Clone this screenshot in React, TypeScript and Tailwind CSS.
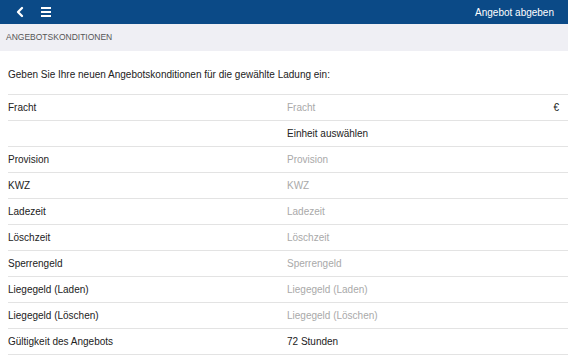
import { ChevronLeft } from "lucide-react";

const rows = [
  { label: "Fracht", value: "Fracht", placeholder: true, suffix: "€" },
  { label: "", value: "Einheit auswählen", placeholder: false },
  { label: "Provision", value: "Provision", placeholder: true },
  { label: "KWZ", value: "KWZ", placeholder: true },
  { label: "Ladezeit", value: "Ladezeit", placeholder: true },
  { label: "Löschzeit", value: "Löschzeit", placeholder: true },
  { label: "Sperrengeld", value: "Sperrengeld", placeholder: true },
  { label: "Liegegeld (Laden)", value: "Liegegeld (Laden)", placeholder: true },
  { label: "Liegegeld (Löschen)", value: "Liegegeld (Löschen)", placeholder: true },
  { label: "Gültigkeit des Angebots", value: "72 Stunden", placeholder: false },
];

const App = () => {
  return (
    <div className="h-[355px] w-[568px] overflow-hidden bg-white font-['Liberation_Sans',Arial,sans-serif] text-[10px] text-[#222]">
      <div className="flex h-6 items-center bg-[#0b4a87] px-2 text-white">
        <ChevronLeft className="ml-1 h-4 w-4" strokeWidth={3.5} />
        <div className="ml-[13px] flex w-[10px] flex-col gap-[2px]">
          <span className="h-[2px] bg-white" />
          <span className="h-[2px] bg-white" />
          <span className="h-[2px] bg-white" />
        </div>
        <span className="ml-auto mr-[6px]">Angebot abgeben</span>
      </div>
      <div className="flex h-[27px] items-center bg-[#efeff4] px-[6px] text-[8.5px] text-[#555]">
        ANGEBOTSKONDITIONEN
      </div>
      <div className="flex h-[43px] items-center px-2 pt-[3px]">
        Geben Sie Ihre neuen Angebotskonditionen für die gewählte Ladung ein:
      </div>
      <div className="ml-2 border-t border-[#e3e3e3]">
        {rows.map((row, index) => (
          <div
            key={index}
            className="flex h-[26px] items-center border-b border-[#e3e3e3]"
          >
            <span className="w-[279px]">{row.label}</span>
            <span
              className={row.placeholder ? "flex-1 text-[#a9a9a9]" : "flex-1"}
            >
              {row.value}
            </span>
            {row.suffix && <span className="mr-[9px]">{row.suffix}</span>}
          </div>
        ))}
      </div>
    </div>
  );
};

export default App;
